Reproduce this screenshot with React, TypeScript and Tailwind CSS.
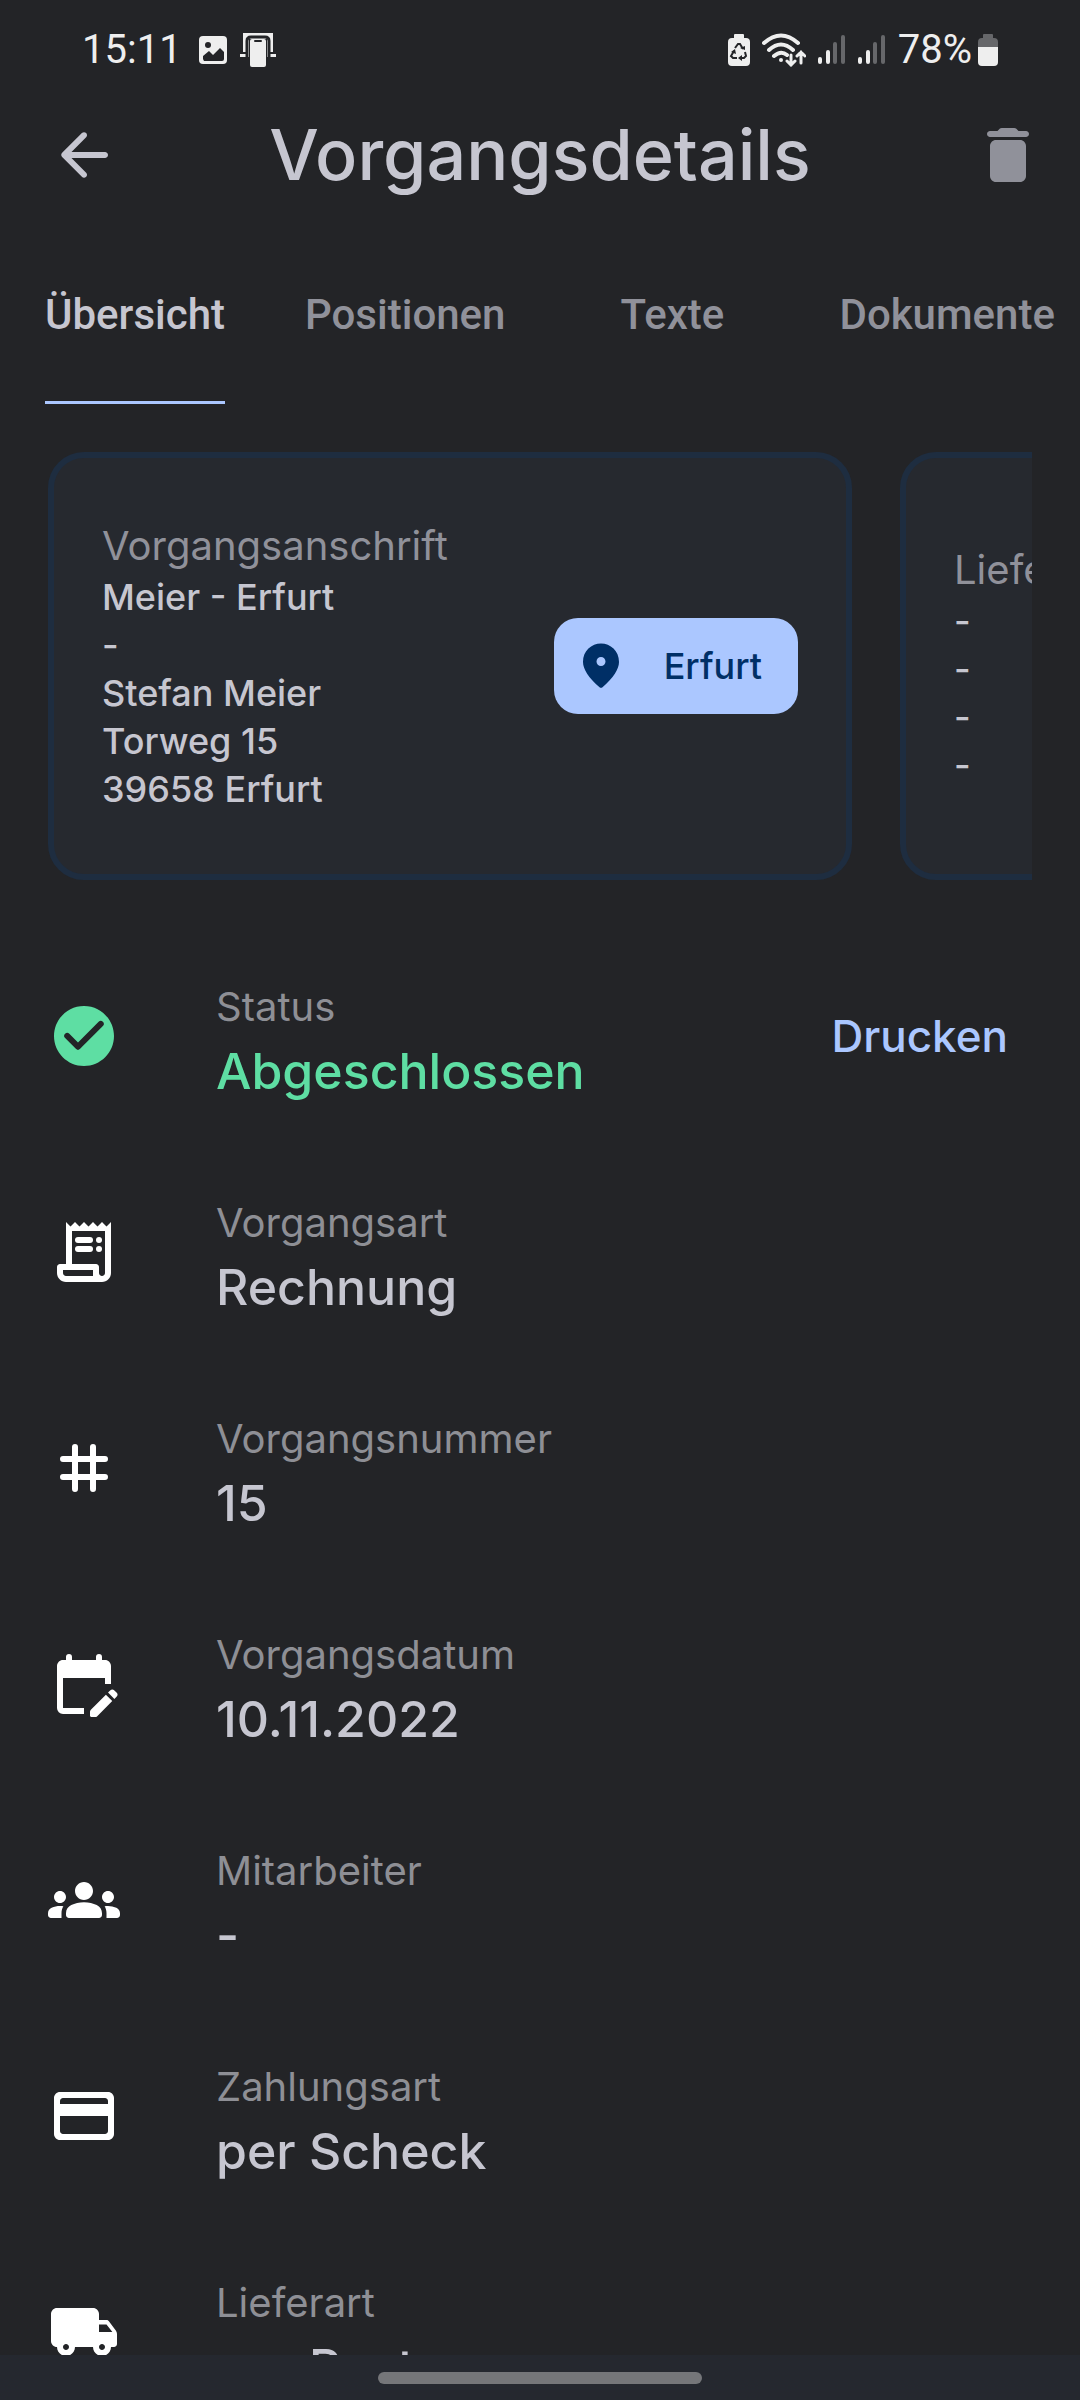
import type { ReactNode } from "react";

const TABS = ["Übersicht", "Positionen", "Texte", "Dokumente"];

const ADDRESSES = [
  {
    label: "Vorgangsanschrift",
    lines: ["Meier - Erfurt", "-", "Stefan Meier", "Torweg 15", "39658 Erfurt"],
    city: "Erfurt",
  },
  { label: "Lieferanschrift", lines: ["-", "-", "-", "-"], city: "" },
];

function Icon({ children, className = "size-[72px]" }: { children: ReactNode; className?: string }) {
  return (
    <svg className={`${className} shrink-0`} viewBox="0 0 24 24" fill="currentColor" aria-hidden="true">
      {children}
    </svg>
  );
}

const DETAILS = [
  {
    label: "Status",
    value: "Abgeschlossen",
    done: true,
    action: "Drucken",
    icon: <path d="M12 2C6.48 2 2 6.48 2 12s4.48 10 10 10 10-4.48 10-10S17.52 2 12 2zM9.29 16.29L5.7 12.7a.996.996 0 1 1 1.41-1.41L10 14.17l6.88-6.88a.996.996 0 1 1 1.41 1.41l-7.59 7.59a.996.996 0 0 1-1.41 0z" />,
  },
  {
    label: "Vorgangsart",
    value: "Rechnung",
    icon: (
      <>
        <path d="M19.5 3.5L18 2l-1.5 1.5L15 2l-1.5 1.5L12 2l-1.5 1.5L9 2 7.5 3.5 6 2v14H4c-.55 0-1 .45-1 1v2c0 1.66 1.34 3 3 3h12c1.66 0 3-1.34 3-3V2l-1.5 1.5zM15 20H6c-.55 0-1-.45-1-1v-1h10v2zm4-1c0 .55-.45 1-1 1s-1-.45-1-1v-2c0-.55-.45-1-1-1H8V5h11v14z" />
        <rect x="9" y="7" width="6" height="2" rx="1" />
        <rect x="9" y="10" width="6" height="2" rx="1" />
        <circle cx="17" cy="8" r="1" />
        <circle cx="17" cy="11" r="1" />
      </>
    ),
  },
  {
    label: "Vorgangsnummer",
    value: "15",
    icon: <path d="M9 5v14M15 5v14M5 9h14M5 15h14" stroke="currentColor" strokeWidth="2" strokeLinecap="round" />,
  },
  {
    label: "Vorgangsdatum",
    value: "10.11.2022",
    icon: <path d="M12 22H5a2 2 0 0 1-2-2V6c0-1.1.9-2 2-2h1V3a1 1 0 0 1 2 0v1h8V3a1 1 0 0 1 2 0v1h1c1.1 0 2 .9 2 2v6h-2v-2H5v10h7v2zm10.13-5.01l.71-.71a.996.996 0 0 0 0-1.41l-.71-.71a.996.996 0 0 0-1.41 0l-.71.71 2.12 2.12zm-.71.71l-5.01 5.01c-.18.18-.44.29-.7.29H14.5c-.28 0-.5-.22-.5-.5v-1.21c0-.27.11-.52.29-.71l5.01-5 2.12 2.12z" />,
  },
  {
    label: "Mitarbeiter",
    value: "-",
    icon: <path d="M12 12.75c1.63 0 3.07.39 4.24.9 1.08.48 1.76 1.56 1.76 2.73V17c0 .55-.45 1-1 1H7c-.55 0-1-.45-1-1v-.61c0-1.18.68-2.26 1.76-2.73 1.17-.52 2.61-.91 4.24-.91zM4 13c1.1 0 2-.9 2-2s-.9-2-2-2-2 .9-2 2 .9 2 2 2zm1.13 1.1C4.76 14.04 4.39 14 4 14c-.99 0-1.93.21-2.78.58A2.01 2.01 0 0 0 0 16.43V17c0 .55.45 1 1 1h3.5v-1.61c0-.83.23-1.61.63-2.29zM20 13c1.1 0 2-.9 2-2s-.9-2-2-2-2 .9-2 2 .9 2 2 2zm4 3.43c0-.81-.48-1.53-1.22-1.85A6.95 6.95 0 0 0 20 14c-.39 0-.76.04-1.13.1.4.68.63 1.46.63 2.29V18H23c.55 0 1-.45 1-1v-.57zM12 6c1.66 0 3 1.34 3 3s-1.34 3-3 3-3-1.34-3-3 1.34-3 3-3z" />,
  },
  {
    label: "Zahlungsart",
    value: "per Scheck",
    icon: <path fillRule="evenodd" d="M4 4h16c1.11 0 2 .89 2 2v12c0 1.11-.89 2-2 2H4c-1.11 0-2-.89-2-2V6c0-1.11.89-2 2-2zm0 8v5c0 .55.45 1 1 1h14c.55 0 1-.45 1-1v-5H4zm0-4h16V7c0-.55-.45-1-1-1H5c-.55 0-1 .45-1 1v1z" />,
  },
  {
    label: "Lieferart",
    value: "per Post",
    icon: <path d="M19.5 8H17V6c0-1.1-.9-2-2-2H3c-1.1 0-2 .9-2 2v9c0 1.1.9 2 2 2 0 1.66 1.34 3 3 3s3-1.34 3-3h6c0 1.66 1.34 3 3 3s3-1.34 3-3h1c.55 0 1-.45 1-1v-3.33c0-.43-.14-.85-.4-1.2L20.3 8.4c-.19-.25-.49-.4-.8-.4zM6 18c-.55 0-1-.45-1-1s.45-1 1-1 1 .45 1 1-.45 1-1 1zm13.5-8.5l1.96 2.5H17V9.5h2.5zM18 18c-.55 0-1-.45-1-1s.45-1 1-1 1 .45 1 1-.45 1-1 1z" />,
  },
];

function Signal() {
  return (
    <svg className="h-8 w-7" viewBox="0 0 28 32" fill="none" stroke="#eee" strokeWidth="4" strokeLinecap="round" aria-hidden="true">
      <path d="M2 25v3M10 18v10" />
      <path d="M17 10v18M25 3v25" stroke="#66676a" />
    </svg>
  );
}

function StatusBar() {
  return (
    <div className="flex h-[100px] shrink-0 items-center justify-between px-[82px] font-['Roboto',sans-serif] text-[40px] leading-[44px] text-[#eee]">
      <div className="flex items-center gap-4">
        <span>15:11</span>
        <div className="flex items-center gap-3">
          <svg className="size-[30px]" viewBox="0 0 30 30" fill="#eee" aria-hidden="true">
            <rect x="1" y="1" width="28" height="28" rx="4" />
            <circle cx="10" cy="10" r="3" fill="#232427" />
            <path d="M5 24v-3l6-5 4 4 7-7 4 4v7a2 2 0 0 1-2 2H6z" fill="#232427" />
          </svg>
          <svg className="h-[34px] w-9" viewBox="0 0 36 34" aria-hidden="true">
            <path d="M3 0h30v19h3v5H0v-5h3z" fill="#eee" />
            <path d="M0 20h7M29 20h7" stroke="#232427" strokeWidth="2" />
            <path d="M7 24V8q0-4 4-4h14q4 0 4 4v16" fill="none" stroke="#232427" strokeWidth="3" />
            <rect x="9" y="6" width="18" height="28" fill="#232427" />
            <rect x="10" y="6" width="16" height="28" rx="2" fill="#eee" />
            <path d="M15 8h6" stroke="#232427" strokeWidth="2" strokeLinecap="round" />
          </svg>
        </div>
      </div>
      <div className="flex items-center gap-3">
        <svg className="h-8 w-[22px]" viewBox="0 0 22 32" aria-hidden="true">
          <path d="M6 1q0-1 1-1h8q1 0 1 1v3h2q4 0 4 4v20q0 4-4 4H4q-4 0-4-4V8q0-4 4-4h2z" fill="#eee" />
          <path d="M7 14l3-4h2l3 5M17 18l1 4-2 2h-4M9 24H5l-2-2 3-5" fill="none" stroke="#232427" strokeWidth="2" />
          <path d="M12 14l5 2V12zM14 21v6l-4-3zM3 18l4-3 1 5z" fill="#232427" />
        </svg>
        <svg className="h-[34px] w-11" viewBox="0 0 44 34" fill="none" stroke="#eee" strokeWidth="4" strokeLinecap="round" aria-hidden="true">
          <path d="M2 10q17-15 34 0M7 17q12-11 24 0M12 23q7-6 13-1" />
          <circle cx="19" cy="27" r="2" fill="#eee" stroke="none" />
          <path d="M29 22v10M25 28l4 4 4-4M39 30V19M35 23l4-4 4 4" strokeWidth="3" />
        </svg>
        <Signal />
        <Signal />
        <div className="flex items-center gap-1.5">
          <span>78%</span>
          <svg className="h-8 w-5" viewBox="0 0 20 32" aria-hidden="true">
            <path d="M5 1q0-1 1-1h8q1 0 1 1v3h1q4 0 4 4v5H0V8q0-4 4-4h1z" fill="#66676a" />
            <path d="M0 13h20v15q0 4-4 4H4q-4 0-4-4z" fill="#eee" />
          </svg>
        </div>
      </div>
    </div>
  );
}

export default function App() {
  return (
    <div className="flex h-screen flex-col overflow-hidden bg-[#232427] font-['Inter',sans-serif] text-[#c6c6d0]">
      <StatusBar />

      <header className="flex h-[110px] shrink-0 items-center justify-between px-9">
        <button type="button" aria-label="Zurück" className="pl-3">
          <Icon>
            <path d="M19 11H7.83l4.88-4.88c.39-.39.39-1.03 0-1.42-.39-.39-1.02-.39-1.41 0l-6.59 6.59c-.39.39-.39 1.02 0 1.41l6.59 6.59c.39.39 1.02.39 1.41 0 .39-.39.39-1.02 0-1.41L7.83 13H19c.55 0 1-.45 1-1s-.45-1-1-1z" />
          </Icon>
        </button>
        <h1 className="text-[70px] font-medium leading-[80px]">Vorgangsdetails</h1>
        <button type="button" aria-label="Löschen" className="pl-3 text-[#90919a]">
          <Icon>
            <path d="M6 19c0 1.1.9 2 2 2h8c1.1 0 2-.9 2-2V9c0-1.1-.9-2-2-2H8c-1.1 0-2 .9-2 2v10zM18 4h-2.5l-.71-.71c-.18-.18-.44-.29-.7-.29H9.91c-.26 0-.52.11-.7.29L8.5 4H6c-.55 0-1 .45-1 1s.45 1 1 1h12c.55 0 1-.45 1-1s-.45-1-1-1z" />
          </Icon>
        </button>
      </header>

      <div role="tablist" className="flex h-[194px] shrink-0 pl-[5px] font-['Roboto',sans-serif] text-[42px] font-medium leading-[50px]">
        {TABS.map((tab, i) => (
          <button
            key={tab}
            type="button"
            role="tab"
            aria-selected={i === 0}
            className="flex min-w-[254px] shrink-0 justify-center px-10 text-[#90919a] aria-selected:text-[#c6c6d0]"
          >
            <span className={i === 0 ? "h-full border-b-[3px] border-[#abc7ff] pt-20" : "pt-20"}>{tab}</span>
          </button>
        ))}
      </div>

      <main className="min-h-0 flex-1 overflow-hidden px-12 pt-12">
        <section className="flex gap-12 overflow-hidden">
          {ADDRESSES.map((address) => (
            <article
              key={address.label}
              className="flex h-[428px] w-[804px] shrink-0 items-center justify-between rounded-[36px] border-6 border-[#1e2d40] bg-[#26292f] px-12"
            >
              <div>
                <h2 className="text-[40px] leading-[54px] text-[#90919a]">{address.label}</h2>
                {address.lines.map((line, i) => (
                  <p key={i} className="text-[36px] font-medium leading-[48px]">{line}</p>
                ))}
              </div>
              {address.city && (
                <button type="button" className="flex h-24 items-center gap-9 rounded-3xl bg-[#abc7ff] pl-5 pr-9 text-[36px] font-medium text-[#002f66]">
                  <Icon className="size-[54px]">
                    <path d="M12 2c-4.2 0-8 3.22-8 8.2 0 3.18 2.45 6.92 7.34 11.23.38.33.95.33 1.33 0C17.55 17.12 20 13.38 20 10.2 20 5.22 16.2 2 12 2zm0 10c-1.1 0-2-.9-2-2s.9-2 2-2 2 .9 2 2-.9 2-2 2z" />
                  </Icon>
                  {address.city}
                </button>
              )}
            </article>
          ))}
        </section>

        <ul className="pt-12">
          {DETAILS.map((item) => (
            <li key={item.label} className="flex h-[216px] items-center gap-24">
              <span className={item.done ? "text-[#5edea3]" : "text-white"}>
                <Icon>{item.icon}</Icon>
              </span>
              <div className="flex-1">
                <p className="text-[40px] leading-[70px] text-[#8e8f95]">{item.label}</p>
                <p className={`text-[50px] font-medium leading-[58px] ${item.done ? "text-[#5edea3]" : ""}`}>{item.value}</p>
              </div>
              {item.action && (
                <button type="button" className="pr-6 text-[44px] font-medium text-[#abc7ff]">{item.action}</button>
              )}
            </li>
          ))}
        </ul>
      </main>

      <footer className="flex h-[45px] shrink-0 items-center justify-center bg-[#25282f]">
        <div className="h-3 w-[30%] rounded-md bg-[#757679]" />
      </footer>
    </div>
  );
}
